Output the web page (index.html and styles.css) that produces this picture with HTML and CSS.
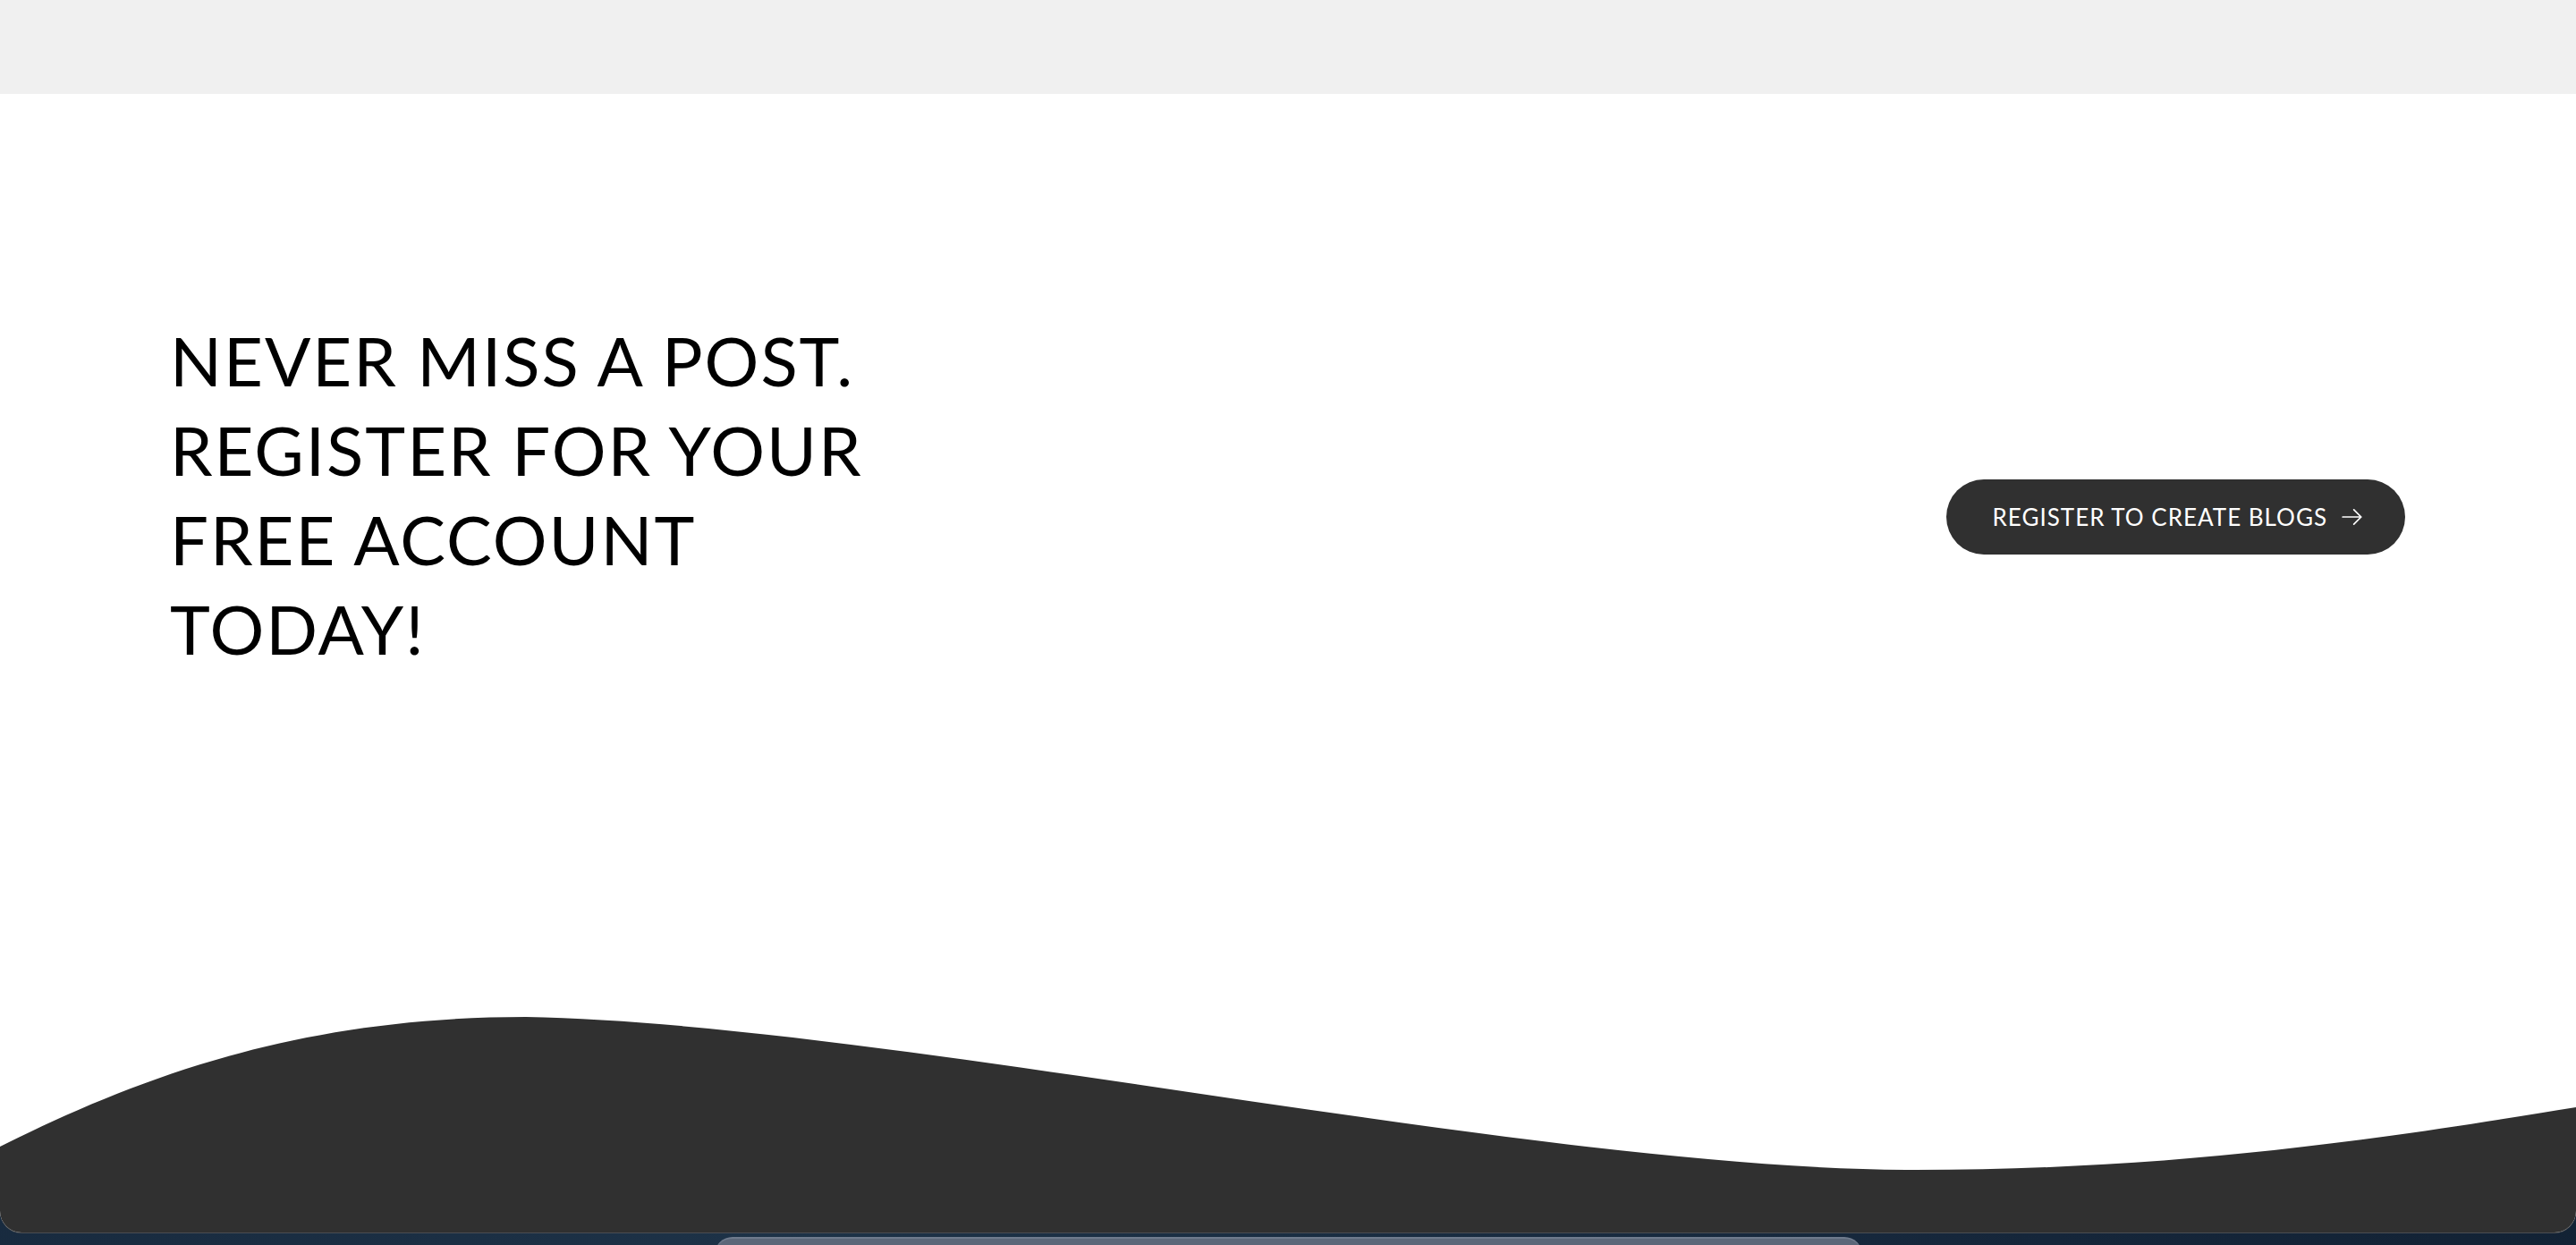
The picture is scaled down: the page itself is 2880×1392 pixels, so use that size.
FILE: index.html
```html
<!DOCTYPE html>
<html lang="en">
<head>
<meta charset="utf-8">
<title>Register</title>
<link rel="stylesheet" href="styles.css">
</head>
<body>
  <div class="topbar"></div>
  <section class="cta">
    <div class="cta-content">
      <h2 class="cta-title">NEVER MISS A POST. REGISTER FOR YOUR FREE ACCOUNT TODAY!</h2>
      <a class="cta-btn" href="#">REGISTER TO CREATE BLOGS
        <svg class="cta-arrow" viewBox="0 0 24 24" width="26" height="26" aria-hidden="true">
          <path d="M2 12h19M13.5 4.5L21 12l-7.5 7.5" fill="none" stroke="#fff" stroke-width="1.6" stroke-linecap="round" stroke-linejoin="round"/>
        </svg>
      </a>
    </div>
    <svg class="wave" viewBox="0 0 2880 241" preserveAspectRatio="none" aria-hidden="true">
      <path d="M0,145 C150,70 330,0 588,0 C1000,8 1700,168 2131,171 C2450,172 2700,130 2880,101 L2880,241 L0,241 Z" fill="#303030"/>
    </svg>
  </section>
  <div class="next-card"></div>
</body>
</html>
```
FILE: styles.css
```css
* { box-sizing: border-box; }

html, body {
  margin: 0;
  padding: 0;
}

body {
  width: 2880px;
  height: 1392px;
  overflow: hidden;
  background: radial-gradient(ellipse at 30% 100%, #1d3247 0%, #15263a 50%, #0f1d2d 100%);
  font-family: "Lato", "Inter", sans-serif;
}

.topbar {
  height: 105px;
  background: #f0f0f0;
}

.cta {
  background: #ffffff;
  border-radius: 0 0 24px 24px;
  overflow: hidden;
  box-shadow: 0 1px 0 #4a4d52;
}

.cta-content {
  height: 1032px;
  display: flex;
  justify-content: space-between;
  align-items: flex-start;
  padding: 248px 191px 0 190px;
}

.cta-title {
  margin: 0;
  width: 860px;
  font-weight: 400;
  font-size: 76px;
  line-height: 100px;
  letter-spacing: 2px;
  color: #000;
}

.cta-btn {
  margin-top: 183px;
  height: 84px;
  display: inline-flex;
  align-items: center;
  gap: 15px;
  padding: 0 46px 0 52px;
  background: #303030;
  color: #fff;
  border-radius: 42px;
  text-decoration: none;
  font-size: 26px;
  letter-spacing: 1px;
  white-space: nowrap;
}

.cta-arrow {
  display: block;
  width: 26px;
  height: 26px;
}

.wave {
  display: block;
  width: 100%;
  height: 241px;
}

.next-card {
  margin: 5px 0 0 799px;
  width: 1283px;
  height: 20px;
  background: #5b6779;
  border-top: 2px solid #6f7b8d;
  border-radius: 22px 22px 0 0;
}
```
